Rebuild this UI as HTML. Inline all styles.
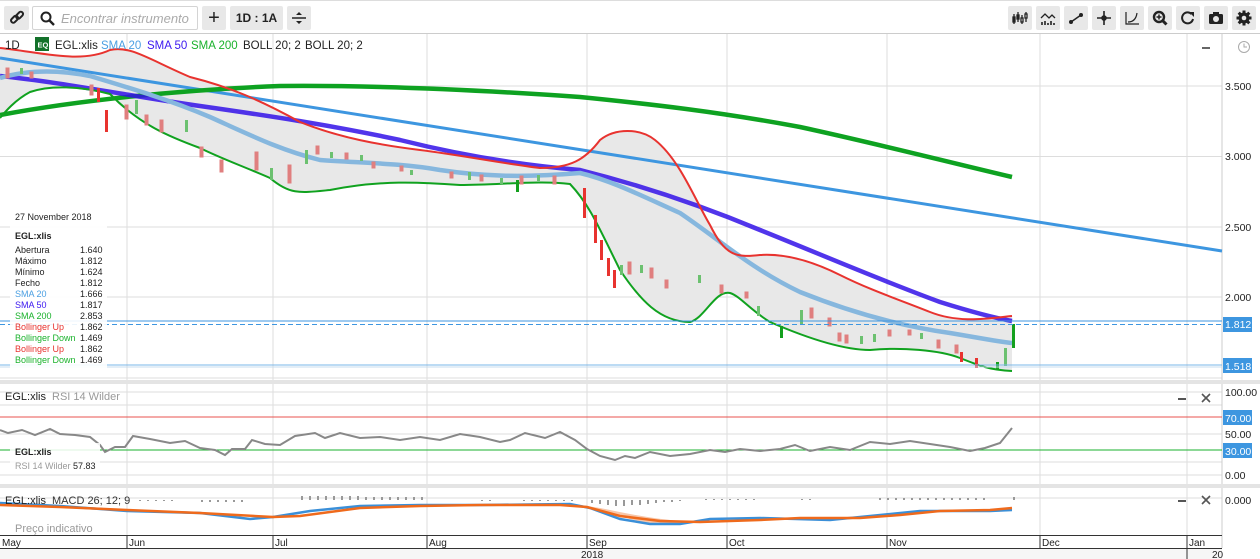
<!DOCTYPE html>
<html><head><meta charset="utf-8">
<style>
*{margin:0;padding:0;box-sizing:border-box}
body{width:1260px;height:559px;overflow:hidden;background:#fff;font-family:"Liberation Sans",sans-serif;position:relative;color:#222}
.tb{position:absolute;top:0;left:0;width:1260px;height:34px;background:#fff;border-top:1px solid #ddd;border-bottom:1px solid #ccc}
.btn{position:absolute;top:5px;height:24px;background:#e8e8e8;border-radius:2px;display:flex;align-items:center;justify-content:center;font-size:12px;font-weight:bold;color:#222}
.search{position:absolute;left:32px;top:5px;width:166px;height:24px;border:1px solid #d4d4d4;background:#fff;border-radius:2px}
.search span{position:absolute;left:28px;top:4px;font-size:13px;font-style:italic;color:#aaa}
svg text{font-family:"Liberation Sans",sans-serif}
</style></head><body>
<div class="tb">
 <div class="btn" style="left:4px;width:25px"><svg width="16" height="16" viewBox="0 0 16 16"><g fill="none" stroke="#222" stroke-width="2"><rect x="1.5" y="7" width="8" height="4.5" rx="2.2" transform="rotate(-45 5.5 9.2)"/><rect x="6.5" y="3" width="8" height="4.5" rx="2.2" transform="rotate(-45 10.5 5.2)"/></g></svg></div>
 <div class="search"><svg style="position:absolute;left:7px;top:4px" width="15" height="15" viewBox="0 0 15 15"><circle cx="6" cy="6" r="4.5" fill="none" stroke="#222" stroke-width="2"/><line x1="9.5" y1="9.5" x2="14" y2="14" stroke="#222" stroke-width="2.4"/></svg><span>Encontrar instrumento</span></div>
 <div class="btn" style="left:202px;width:24px;font-size:20px;font-weight:normal">+</div>
 <div class="btn" style="left:230px;width:53px">1D : 1A</div>
 <div class="btn" style="left:287px;width:24px"><svg width="16" height="14"><line x1="1" y1="7" x2="15" y2="7" stroke="#222" stroke-width="1.5"/><path d="M5 4L8 1L11 4Z M5 10L8 13L11 10Z" fill="#222"/></svg></div>
 <div class="btn" style="left:1008px;width:24px"><svg width="16" height="16" fill="none" stroke="#222" stroke-width="1.3"><path d="M2 4v10M6 2v10M10 5v9M14 2v10"/><rect x="1" y="7" width="2" height="5" fill="#222"/><rect x="5" y="5" width="2" height="4" fill="#222"/><rect x="9" y="8" width="2" height="4" fill="#fff"/><rect x="13" y="4" width="2" height="4" fill="#fff"/></svg></div>
 <div class="btn" style="left:1036px;width:24px"><svg width="16" height="16" fill="none" stroke="#222" stroke-width="1.3"><path d="M1 8l4-4 4 4 3-3 3 3"/><path d="M2 15v-3M5 15v-4M8 15v-2M11 15v-4M14 15v-2" stroke-width="1.6"/></svg></div>
 <div class="btn" style="left:1064px;width:24px"><svg width="16" height="16"><line x1="3" y1="12" x2="13" y2="5" stroke="#222" stroke-width="1.5"/><circle cx="3" cy="12" r="2" fill="#222"/><circle cx="13" cy="5" r="2" fill="#222"/></svg></div>
 <div class="btn" style="left:1092px;width:24px"><svg width="16" height="16" stroke="#222" stroke-width="1.6"><path d="M8 1v14M1 8h14"/><circle cx="8" cy="8" r="2" fill="#222"/></svg></div>
 <div class="btn" style="left:1120px;width:24px"><svg width="16" height="16" fill="none" stroke="#222" stroke-width="1.2"><path d="M2 2v12h13M4 12c4 0 8-2 9-9"/></svg></div>
 <div class="btn" style="left:1148px;width:24px"><svg width="16" height="16"><circle cx="7" cy="7" r="5" fill="none" stroke="#222" stroke-width="2.4"/><line x1="10.5" y1="10.5" x2="14.5" y2="14.5" stroke="#222" stroke-width="3"/><path d="M7 4.5v5M4.5 7h5" stroke="#222" stroke-width="1.5"/></svg></div>
 <div class="btn" style="left:1176px;width:24px"><svg width="16" height="16"><path d="M13 9a5.5 5.5 0 1 1-1.5-5" fill="none" stroke="#222" stroke-width="2"/><path d="M9 2l5 0 0 5z" fill="#222"/></svg></div>
 <div class="btn" style="left:1204px;width:24px"><svg width="16" height="14"><rect x="1" y="3" width="14" height="10" rx="1.5" fill="#222"/><rect x="5" y="1" width="6" height="3" fill="#222"/><circle cx="8" cy="8" r="3" fill="#e8e8e8"/></svg></div>
 <div class="btn" style="left:1232px;width:24px"><svg width="16" height="16" viewBox="0 0 16 16"><g fill="#222"><circle cx="8" cy="8" r="5.5"/><rect x="6.5" y="0.5" width="3" height="15"/><rect x="0.5" y="6.5" width="15" height="3"/><rect x="6.5" y="0.5" width="3" height="15" transform="rotate(45 8 8)"/><rect x="6.5" y="0.5" width="3" height="15" transform="rotate(-45 8 8)"/></g><circle cx="8" cy="8" r="2.3" fill="#e8e8e8"/></svg></div>
</div>

<svg style="position:absolute;left:0;top:34px" width="1260" height="525" viewBox="0 34 1260 525">
<g stroke="#ddd" stroke-width="1">
<path d="M0 86H1222M0 156.5H1222M0 227H1222M0 297H1222M0 378H1222"/>
<path d="M127 34V535M273 34V535M427 34V535M587 34V535M727 34V535M887 34V535M1040 34V535M1187 34V535"/>
<path d="M0 392H1222M0 405H1222M0 434H1222M0 462H1222M0 475H1222M0 498H1222"/>
</g>
<line x1="1222" y1="34" x2="1222" y2="548" stroke="#ccc"/>
<rect x="0" y="380" width="1260" height="4" fill="#e4e4e4"/>
<rect x="0" y="484" width="1260" height="4" fill="#e4e4e4"/>

<path d="M0 48 C40 52 80 64 110 50 C130 45 150 60 190 77 C230 87 260 100 300 122 C340 138 380 145 420 150 C460 155 500 163 540 168 C570 168 585 160 600 140 C615 128 640 128 655 140 C680 160 695 200 710 225 C725 255 735 258 760 255 C790 253 820 265 840 275 C870 290 900 300 930 312 C960 324 990 318 1012 316 L1012 371 C990 370 980 366 960 358 C940 350 900 347 870 350 C840 350 800 335 770 322 C750 310 740 296 730 293 C715 290 705 318 690 322 C660 322 640 300 620 270 C600 230 590 205 570 184 C540 180 500 185 460 185 C420 182 380 180 330 190 C300 193 290 195 270 178 C240 165 220 158 200 148 C170 137 140 125 110 94 C80 86 50 85 30 92 C15 100 5 112 0 118 Z" fill="#e8e8e8"/>

<line x1="0" y1="58" x2="1222" y2="251" stroke="#3d96e0" stroke-width="3"/>
<path d="M0 115 C80 100 180 90 280 86 C380 85 480 90 580 97 C650 104 720 112 800 127 C870 142 940 160 1012 177" fill="none" stroke="#0ea221" stroke-width="4.5"/>
<path d="M0 76 C60 82 130 96 200 106 C270 116 330 125 400 140 C460 155 520 165 580 170 C640 185 700 205 760 230 C820 254 880 280 940 302 C975 313 995 318 1012 321" fill="none" stroke="#3312e8" stroke-width="4.5" opacity="0.85"/>
<path d="M0 78 C20 72 50 68 90 76 C130 88 170 100 210 117 C250 135 280 150 320 160 C360 163 400 163 440 170 C480 176 520 178 580 173 C610 180 640 195 680 213 C720 240 750 268 800 292 C850 312 900 326 950 333 C980 338 1000 342 1012 343" fill="none" stroke="#86b7de" stroke-width="4.5"/>
<path d="M0 48 C40 52 80 64 110 50 C130 45 150 60 190 77 C230 87 260 100 300 122 C340 138 380 145 420 150 C460 155 500 163 540 168 C570 168 585 160 600 140 C615 128 640 128 655 140 C680 160 695 200 710 225 C725 255 735 258 760 255 C790 253 820 265 840 275 C870 290 900 300 930 312 C960 324 990 318 1012 316" fill="none" stroke="#e8332f" stroke-width="2"/>
<path d="M0 118 C5 112 15 100 30 92 C50 85 80 86 110 94 C140 125 170 137 200 148 C220 158 240 165 270 178 C290 195 300 193 330 190 C380 180 420 182 460 185 C500 185 540 180 570 184 C590 205 600 230 620 270 C640 300 660 322 690 322 C705 318 715 290 730 293 C740 296 750 310 770 322 C800 335 840 350 870 350 C900 347 940 350 960 358 C980 366 990 370 1012 371" fill="none" stroke="#10a21f" stroke-width="2"/>

<g stroke-width="1">
<g fill="#e07f7f" stroke="#e07f7f">
<rect x="6" y="68" width="3" height="10"/><rect x="30" y="72" width="3" height="6"/><rect x="90" y="85" width="3" height="10"/><rect x="125" y="105" width="3" height="14"/><rect x="145" y="115" width="3" height="10"/><rect x="160" y="120" width="3" height="12"/><rect x="200" y="147" width="3" height="10"/><rect x="220" y="160" width="3" height="12"/><rect x="255" y="152" width="3" height="18"/><rect x="288" y="165" width="3" height="18"/><rect x="316" y="146" width="3" height="8"/><rect x="345" y="153" width="3" height="6"/><rect x="372" y="162" width="3" height="6"/><rect x="400" y="166" width="3" height="5"/><rect x="450" y="172" width="3" height="6"/><rect x="480" y="175" width="3" height="6"/><rect x="520" y="176" width="3" height="8"/><rect x="553" y="176" width="3" height="8"/><rect x="628" y="262" width="3" height="12"/><rect x="650" y="268" width="3" height="10"/><rect x="665" y="280" width="3" height="8"/><rect x="720" y="285" width="3" height="8"/><rect x="745" y="292" width="3" height="6"/><rect x="810" y="308" width="3" height="10"/><rect x="828" y="318" width="3" height="8"/><rect x="838" y="333" width="3" height="8"/><rect x="845" y="335" width="3" height="8"/><rect x="888" y="330" width="3" height="6"/><rect x="908" y="330" width="3" height="5"/><rect x="937" y="340" width="3" height="8"/><rect x="955" y="345" width="3" height="8"/></g>
<g fill="#e8332f"><rect x="97" y="88" width="3" height="14"/><rect x="105" y="110" width="3" height="22"/><rect x="583" y="188" width="3" height="30"/><rect x="594" y="215" width="3" height="28"/><rect x="600" y="240" width="3" height="20"/><rect x="607" y="258" width="3" height="18"/><rect x="613" y="270" width="3" height="18"/><rect x="960" y="352" width="3" height="10"/><rect x="975" y="358" width="3" height="10"/></g>
<g fill="#6cc170"><rect x="20" y="68" width="3" height="6"/><rect x="135" y="100" width="3" height="14"/><rect x="185" y="120" width="3" height="12"/><rect x="270" y="168" width="3" height="12"/><rect x="305" y="150" width="3" height="14"/><rect x="330" y="152" width="3" height="6"/><rect x="360" y="155" width="3" height="6"/><rect x="410" y="170" width="3" height="5"/><rect x="468" y="172" width="3" height="8"/><rect x="500" y="178" width="3" height="6"/><rect x="537" y="175" width="3" height="6"/><rect x="620" y="265" width="3" height="10"/><rect x="640" y="265" width="3" height="8"/><rect x="698" y="275" width="3" height="8"/><rect x="757" y="306" width="3" height="10"/><rect x="800" y="310" width="3" height="14"/><rect x="860" y="336" width="3" height="8"/><rect x="873" y="334" width="3" height="8"/><rect x="920" y="333" width="3" height="6"/><rect x="1004" y="348" width="3" height="18"/></g>
<g fill="#14a01e"><rect x="516" y="180" width="3" height="12"/><rect x="780" y="326" width="3" height="12"/><rect x="1012" y="324" width="3" height="24"/><rect x="996" y="362" width="3" height="8"/></g>
</g>

<line x1="0" y1="321" x2="1222" y2="321" stroke="#3d96e0"/>
<line x1="0" y1="324.5" x2="1222" y2="324.5" stroke="#3d96e0" stroke-dasharray="5,3"/>
<line x1="0" y1="365" x2="1222" y2="365" stroke="#7ab7e8"/>
<line x1="0" y1="367" x2="1222" y2="367" stroke="#c7dcef"/>

<g font-size="10.5" fill="#222">
<text x="1225" y="90">3.500</text><text x="1225" y="160">3.000</text><text x="1225" y="231">2.500</text><text x="1225" y="301">2.000</text>
</g>
<rect x="1223" y="317" width="29" height="15" fill="#3d96e0"/><text x="1225" y="328" font-size="10.5" fill="#fff">1.812</text>
<rect x="1223" y="358" width="29" height="15" fill="#3d96e0"/><text x="1225" y="370" font-size="10.5" fill="#fff">1.518</text>
<line x1="1202" y1="48" x2="1210" y2="48" stroke="#666" stroke-width="2"/>
<circle cx="1244" cy="47" r="5.5" fill="none" stroke="#aaa"/><path d="M1244 43.5v3.5h3" fill="none" stroke="#aaa"/>

<g font-size="11.5">
<text x="5" y="49" fill="#222">1D</text>
<rect x="35" y="37" width="14" height="14" fill="#13712a"/><text x="37.5" y="47.5" font-size="7.5" fill="#fff" font-weight="bold">EQ</text>
<text x="55" y="49" fill="#222">EGL:xlis</text>
<text x="101" y="49" fill="#4a9fe2">SMA 20</text>
<text x="147" y="49" fill="#3b17f0">SMA 50</text>
<text x="191" y="49" fill="#1ab22c">SMA 200</text>
<text x="243" y="49" fill="#222">BOLL 20; 2</text>
<text x="305" y="49" fill="#222">BOLL 20; 2</text>
</g>

<rect x="10" y="207" width="97" height="165" fill="#fff" opacity="0.9"/>
<g font-size="9" fill="#222">
<text x="15" y="220">27 November 2018</text>
<text x="15" y="239" font-weight="bold">EGL:xlis</text>
<text x="15" y="253">Abertura</text><text x="80" y="253">1.640</text>
<text x="15" y="264">Máximo</text><text x="80" y="264">1.812</text>
<text x="15" y="275">Mínimo</text><text x="80" y="275">1.624</text>
<text x="15" y="286">Fecho</text><text x="80" y="286">1.812</text>
<text x="15" y="297" fill="#4a9fe2">SMA 20</text><text x="80" y="297">1.666</text>
<text x="15" y="308" fill="#3b17f0">SMA 50</text><text x="80" y="308">1.817</text>
<text x="15" y="319" fill="#1ab22c">SMA 200</text><text x="80" y="319">2.853</text>
<text x="15" y="330" fill="#e8332f">Bollinger Up</text><text x="80" y="330">1.862</text>
<text x="15" y="341" fill="#1ab22c">Bollinger Down</text><text x="80" y="341">1.469</text>
<text x="15" y="352" fill="#e8332f">Bollinger Up</text><text x="80" y="352">1.862</text>
<text x="15" y="363" fill="#1ab22c">Bollinger Down</text><text x="80" y="363">1.469</text>
</g>

<line x1="0" y1="417" x2="1222" y2="417" stroke="#e8534f"/>
<line x1="0" y1="450" x2="1222" y2="450" stroke="#1ab22c"/>
<polyline fill="none" stroke="#888" stroke-width="2" points="0,430 8,433 22,430 35,435 50,429 60,434 75,435 90,437 100,445 105,452 115,447 125,447 133,436 150,439 170,443 185,441 200,448 215,450 225,455 232,449 245,449 252,440 265,444 280,445 295,436 315,433 325,438 340,433 360,438 380,437 400,440 420,437 440,440 460,434 480,437 500,442 510,440 525,433 545,438 560,432 575,440 587,449 600,456 615,460 625,456 635,458 650,452 670,456 690,454 710,450 725,452 740,449 760,451 780,449 795,445 810,451 830,447 850,450 870,442 890,444 910,441 930,444 950,447 970,451 985,448 1000,443 1012,428"/>
<rect x="10" y="443" width="90" height="30" fill="#fff" opacity="0.85"/>
<g font-size="9"><text x="15" y="455" font-weight="bold" fill="#222">EGL:xlis</text><text x="15" y="469" fill="#999">RSI 14 Wilder</text><text x="73" y="469" fill="#222">57.83</text></g>
<g font-size="11"><text x="5" y="400" fill="#222">EGL:xlis</text><text x="52" y="400" fill="#999">RSI 14 Wilder</text></g>
<line x1="1178" y1="399" x2="1186" y2="399" stroke="#555" stroke-width="2"/>
<path d="M1202 394l8 8M1210 394l-8 8" stroke="#555" stroke-width="1.6"/>
<g font-size="10.5" fill="#222"><text x="1225" y="396">100.00</text><text x="1225" y="438">50.00</text><text x="1225" y="479">0.00</text></g>
<rect x="1223" y="410" width="29" height="15" fill="#3d96e0"/><text x="1225" y="422" font-size="10.5" fill="#fff">70.00</text>
<rect x="1223" y="443" width="29" height="15" fill="#3d96e0"/><text x="1225" y="455" font-size="10.5" fill="#fff">30.00</text>

<g stroke="#999" stroke-width="2">
<path d="M140 500v1M148 500v1M156 500v1M164 500v1M172 500v1M202 500v2M210 500v2M218 500v2M226 500v2M234 500v2M242 500v2M302 496v4M310 496v4M318 496v4M326 496v4M334 496v4M342 496v4M350 496v4M358 496v4M366 497v3M374 497v3M382 497v3M390 497v3M398 497v3M406 497v3M414 497v3M422 497v3M482 500v1M490 500v1M524 500v1M532 500v1M540 500v1M548 500v1M556 500v1M564 500v1M572 500v1M592 500v3M600 500v4M608 500v5M616 500v6M624 500v6M632 500v5M640 500v5M648 500v4M656 500v3M664 500v2M672 500v2M680 500v1M706 499v1M714 499v1M722 499v1M730 499v1M738 499v1M746 499v1M754 499v1M802 499v1M810 499v1M880 498v2M888 498v2M896 498v2M904 498v2M912 498v2M920 498v2M928 498v2M936 498v2M944 498v2M952 498v2M960 498v2M968 498v2M976 498v2M984 498v2M1014 497v3"/>
</g>
<path d="M587 506 C610 512 630 522 660 524 C690 524 700 522 710 521 L700 522 C660 521 630 514 600 508 Z" fill="#f8c6a8"/>
<polyline fill="none" stroke="#3a8fd8" stroke-width="2.5" points="0,503 60,506 127,511 200,513 250,519 273,517 310,511 360,506 420,505 480,505 570,504 590,508 620,519 650,524 680,524 710,519 760,518 830,520 870,516 920,511 990,511 1012,510"/>
<polyline fill="none" stroke="#ef6a1c" stroke-width="2.5" points="0,505 60,507 127,510 200,513 273,517 300,516 360,508 420,506 480,505 560,505 587,507 620,516 660,521 700,522 760,520 800,518 860,518 900,515 940,511 990,510 1012,508"/>
<g font-size="11"><text x="5" y="504" fill="#222">EGL:xlis</text><text x="52" y="504" fill="#333">MACD 26; 12; 9</text><text x="15" y="532" fill="#999">Preço indicativo</text></g>
<line x1="1178" y1="501" x2="1186" y2="501" stroke="#555" stroke-width="2"/>
<path d="M1202 496l8 8M1210 496l-8 8" stroke="#555" stroke-width="1.6"/>
<text x="1225" y="504" font-size="10.5" fill="#222">0.000</text>

<rect x="0" y="548" width="1222" height="11" fill="#f6f6f6"/>
<line x1="0" y1="535.5" x2="1222" y2="535.5" stroke="#333"/>
<line x1="0" y1="548.5" x2="1222" y2="548.5" stroke="#333"/>
<g stroke="#333"><path d="M127 535v13M273 535v13M427 535v13M587 535v13M727 535v13M887 535v13M1040 535v13M1187 535v24"/></g>
<g font-size="10" fill="#222">
<text x="2" y="546">May</text><text x="129" y="546">Jun</text><text x="275" y="546">Jul</text><text x="429" y="546">Aug</text><text x="589" y="546">Sep</text><text x="729" y="546">Oct</text><text x="889" y="546">Nov</text><text x="1042" y="546">Dec</text><text x="1189" y="546">Jan</text>
<text x="581" y="558">2018</text><text x="1212" y="558">20</text>
</g>
</svg>
</body></html>
